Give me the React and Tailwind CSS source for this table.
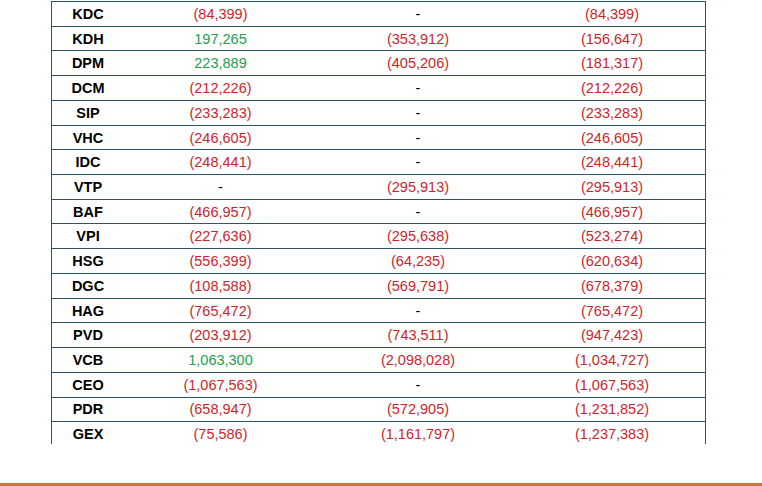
import React from 'react';

const rows = [
  ['KDC', '(84,399)', '-', '(84,399)'],
  ['KDH', '197,265', '(353,912)', '(156,647)'],
  ['DPM', '223,889', '(405,206)', '(181,317)'],
  ['DCM', '(212,226)', '-', '(212,226)'],
  ['SIP', '(233,283)', '-', '(233,283)'],
  ['VHC', '(246,605)', '-', '(246,605)'],
  ['IDC', '(248,441)', '-', '(248,441)'],
  ['VTP', '-', '(295,913)', '(295,913)'],
  ['BAF', '(466,957)', '-', '(466,957)'],
  ['VPI', '(227,636)', '(295,638)', '(523,274)'],
  ['HSG', '(556,399)', '(64,235)', '(620,634)'],
  ['DGC', '(108,588)', '(569,791)', '(678,379)'],
  ['HAG', '(765,472)', '-', '(765,472)'],
  ['PVD', '(203,912)', '(743,511)', '(947,423)'],
  ['VCB', '1,063,300', '(2,098,028)', '(1,034,727)'],
  ['CEO', '(1,067,563)', '-', '(1,067,563)'],
  ['PDR', '(658,947)', '(572,905)', '(1,231,852)'],
  ['GEX', '(75,586)', '(1,161,797)', '(1,237,383)'],
];

// red for negatives, green for positives, black dash
const tone = (v) => {
  if (v === '-') return 'text-black';
  if (v.startsWith('(')) return 'text-[#c9262c]';
  return 'text-[#22a04f]';
};

const Cell = ({ value, width }) => (
  <div className={`${width} flex items-center justify-center pt-[2px] ${tone(value)}`}>{value}</div>
);

export default function App() {
  return (
    <div className="w-[762px] h-[486px] bg-white flex flex-col" style={{ fontFamily: '"Liberation Sans", Arial, sans-serif' }}>
      <div className="h-[444px] overflow-hidden">
        <div className="ml-[51px] w-[655px] border-x border-[#2d5467] mt-px text-[14.5px]">
          {rows.map((r) => (
            <div key={r[0]} className="flex h-[24.72px] border-t border-[#2d5467]">
              <div className="w-[72px] flex items-center justify-center pt-[2px] font-bold text-black">{r[0]}</div>
              <Cell value={r[1]} width="w-[193px]" />
              <Cell value={r[2]} width="w-[202px]" />
              <Cell value={r[3]} width="w-[186px]" />
            </div>
          ))}
        </div>
      </div>
      <div className="flex-1" />
      <div className="h-[3px] bg-[#d0743a]" />
    </div>
  );
}
